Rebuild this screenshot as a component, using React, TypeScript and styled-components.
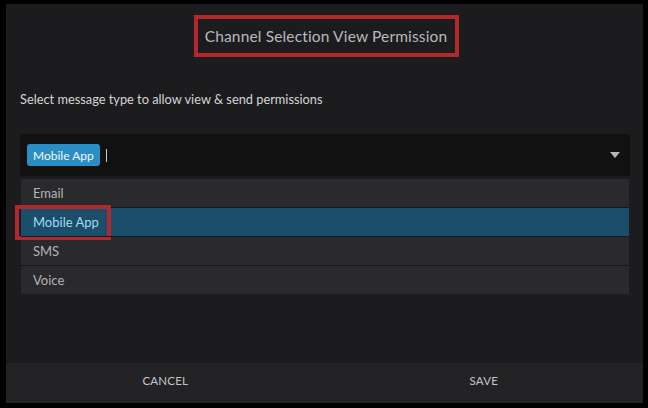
import React from 'react';
import styled, { createGlobalStyle } from 'styled-components';

const GlobalStyle = createGlobalStyle`
  html, body {
    margin: 0;
    padding: 0;
    background: #000;
  }
  body {
    font-family: 'Lato', 'Open Sans', sans-serif;
  }
`;

const Frame = styled.div`
  width: 648px;
  height: 408px;
  box-sizing: border-box;
  padding: 4px 5px 5px 6px;
  background: #000;
`;

const Dialog = styled.div`
  height: 100%;
  display: flex;
  flex-direction: column;
  background: #1c1c1e;
`;

const Header = styled.div`
  display: flex;
  justify-content: center;
  padding-top: 11px;
`;

const TitleBox = styled.div`
  width: 265px;
  height: 42px;
  box-sizing: border-box;
  border: 4px solid #b3282d;
  display: flex;
  align-items: center;
  justify-content: center;
  margin-left: 3px;
`;

const Title = styled.h1`
  margin: 0;
  font-size: 15.5px;
  font-weight: 400;
  color: #b9b9bd;
  letter-spacing: 0.15px;
`;

const Body = styled.div`
  flex: 1;
  padding: 34px 13px 0 14px;
`;

const Hint = styled.p`
  margin: 0 0 27px;
  font-size: 12.8px;
  line-height: 16px;
  color: #d4d4d6;
`;

const SelectBox = styled.div`
  height: 42px;
  box-sizing: border-box;
  background: #111112;
  border-radius: 3px 3px 0 0;
  display: flex;
  align-items: center;
  padding: 0 10px 0 7px;
`;

const Chip = styled.span`
  height: 22px;
  padding: 0 6px;
  display: inline-flex;
  align-items: center;
  background: #2a8ec5;
  border-radius: 3px;
  color: #f2f8fc;
  font-size: 12px;
`;

const Cursor = styled.span`
  width: 1px;
  height: 13px;
  margin-left: 6px;
  background: #c8c8c8;
`;

const Caret = styled.svg`
  margin-left: auto;
`;

const Options = styled.ul`
  list-style: none;
  margin: 3px 1px 0;
  padding: 0;
  background: #2a2a2c;
`;

const Option = styled.li<{ $active?: boolean }>`
  position: relative;
  height: 28px;
  display: flex;
  align-items: center;
  padding-left: 12px;
  font-size: 13px;
  color: ${(p) => (p.$active ? '#a6d8f2' : '#b4b4b8')};
  background: ${(p) => (p.$active ? '#1a4e6b' : 'transparent')};
  & + & {
    border-top: 1px solid #161617;
  }
`;

const Highlight = styled.span`
  position: absolute;
  left: -6px;
  top: -3px;
  width: 96px;
  height: 35px;
  box-sizing: border-box;
  border: 4px solid #b3282d;
  pointer-events: none;
`;

const Footer = styled.div`
  height: 40px;
  display: grid;
  grid-template-columns: 1fr 1fr;
  background: #232326;
`;

const FooterButton = styled.button`
  border: 0;
  background: transparent;
  color: #c6c6ca;
  font-family: 'Lato', 'Open Sans', sans-serif;
  font-size: 11.5px;
  letter-spacing: 0.2px;
  text-transform: uppercase;
  padding: 0 0 5px;
  cursor: pointer;
`;

const options = ['Email', 'Mobile App', 'SMS', 'Voice'];

function App() {
  return (
    <>
      <GlobalStyle />
      <Frame>
        <Dialog>
          <Header>
            <TitleBox>
              <Title>Channel Selection View Permission</Title>
            </TitleBox>
          </Header>
          <Body>
            <Hint>Select message type to allow view &amp; send permissions</Hint>
            <SelectBox>
              <Chip>Mobile App</Chip>
              <Cursor />
              <Caret width="10" height="6" viewBox="0 0 10 6">
                <path d="M0 0h10L5 6z" fill="#b8b8bc" />
              </Caret>
            </SelectBox>
            <Options>
              {options.map((o) => (
                <Option key={o} $active={o === 'Mobile App'}>
                  {o}
                  {o === 'Mobile App' && <Highlight />}
                </Option>
              ))}
            </Options>
          </Body>
          <Footer>
            <FooterButton>Cancel</FooterButton>
            <FooterButton>Save</FooterButton>
          </Footer>
        </Dialog>
      </Frame>
    </>
  );
}

export default App;
